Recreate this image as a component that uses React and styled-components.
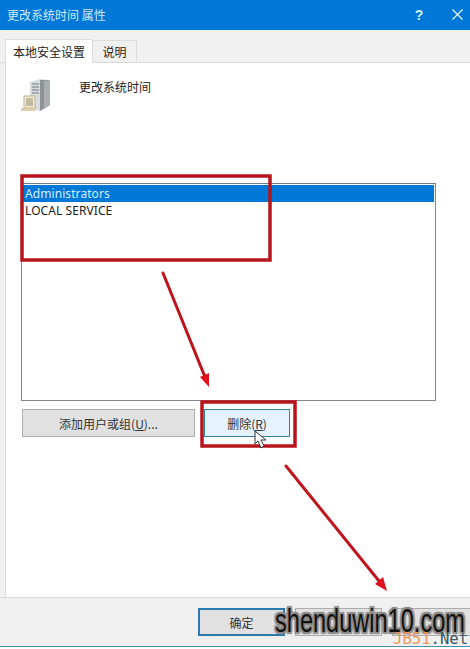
import React from 'react';
import styled, { createGlobalStyle } from 'styled-components';

const GlobalStyle = createGlobalStyle`
  html, body {
    margin: 0;
    padding: 0;
    background: #fff;
  }
  body {
    font-family: "Noto Sans CJK SC", "Liberation Sans", sans-serif;
    font-size: 12px;
    color: #222;
  }
`;

const Dialog = styled.div`
  position: relative;
  width: 470px;
  height: 649px;
  overflow: hidden;
  display: flex;
  flex-direction: column;
  background: #f0f0f0;
`;

const TitleBar = styled.div`
  height: 29px;
  flex: none;
  display: flex;
  align-items: center;
  padding: 0 0 1px 7px;
  background: #0078d7;
  color: #cfe8f8;
  font-size: 12px;
`;

const TitleText = styled.span`
  flex: 1;
`;

const HelpGlyph = styled.span`
  width: 12px;
  margin-right: 27px;
  color: #d8effa;
  font-family: "Liberation Sans", sans-serif;
  font-size: 14px;
  font-weight: bold;
  text-align: center;
`;

const CloseGlyph = styled.svg`
  margin-right: 7px;
`;

const TabStrip = styled.div`
  height: 33px;
  flex: none;
  box-sizing: border-box;
  display: flex;
  align-items: flex-end;
  padding-left: 5px;
  border-bottom: 1px solid #d9d9d9;
`;

const Tab = styled.div`
  box-sizing: border-box;
  display: flex;
  align-items: center;
  justify-content: center;
  color: #222;
  font-size: 12px;
  background: ${(p) => (p.$active ? '#fff' : '#f0f0f0')};
  width: ${(p) => (p.$active ? '87px' : '45px')};
  height: ${(p) => (p.$active ? '24px' : '22px')};
  margin-bottom: ${(p) => (p.$active ? '-1px' : '0')};
  border: 1px solid #dcdcdc;
  border-bottom: none;
  border-right: ${(p) => (p.$active ? 'none' : '1px solid #dcdcdc')};
`;

const Panel = styled.div`
  flex: 1;
  margin-left: 5px;
  padding: 15px 34px 0 15px;
  display: flex;
  flex-direction: column;
  background: #fff;
  border-left: 1px solid #d9d9d9;
`;

const PolicyHeader = styled.div`
  height: 105px;
  flex: none;
  display: flex;
  gap: 26px;
  align-items: flex-start;
`;

const PolicyName = styled.div`
  font-size: 12px;
  line-height: 18px;
`;

const ListBox = styled.div`
  box-sizing: border-box;
  height: 218px;
  flex: none;
  padding: 1px;
  border: 1px solid #828790;
  border-top-color: #6f7a88;
`;

const ListRow = styled.div`
  height: 17px;
  padding-left: 2px;
  line-height: 17px;
  font-family: "Noto Sans", "Liberation Sans", sans-serif;
  font-size: 12px;
  letter-spacing: 0.08px;
  background: ${(p) => (p.$selected ? '#0078d7' : 'transparent')};
  color: ${(p) => (p.$selected ? '#d4ecfa' : '#222')};
`;

const ActionRow = styled.div`
  display: flex;
  gap: 9px;
  margin: 8px 0 0 1px;
`;

const Button = styled.div`
  box-sizing: border-box;
  width: ${(p) => p.$width}px;
  height: 28px;
  flex: none;
  display: flex;
  align-items: center;
  justify-content: center;
  font-size: 12px;
  color: #333;
  background: ${(p) => p.$bg || '#e1e1e1'};
  border: ${(p) => p.$border || '1px solid #adadad'};
`;

const Mnemonic = styled.span`
  text-decoration: underline;
`;

const Footer = styled.div`
  height: 49px;
  flex: none;
  box-sizing: border-box;
  display: flex;
  gap: 10px;
  padding: 10px 0 0 198px;
  border-top: 1px solid #d0dcdc;
`;

const BottomLine = styled.div`
  height: 3px;
  flex: none;
  background: linear-gradient(#3b93bd 0 1px, #fff 1px);
`;

const Annotations = styled.svg`
  position: absolute;
  left: 0;
  top: 0;
  pointer-events: none;
`;

const Watermark = styled.div`
  position: absolute;
  left: 275px;
  top: 601px;
  color: #111;
  font-family: "Liberation Sans", sans-serif;
  font-size: 33px;
  line-height: 40px;
  white-space: nowrap;
  transform: scaleX(0.714);
  transform-origin: left center;
  text-shadow: 2px 0 1px #8f8b88, -2px 0 1px #8f8b88, 0 2px 1px #8f8b88, 0 -2px 1px #8f8b88,
    2px 2px 1px #8f8b88, -2px -2px 1px #8f8b88, 2px -2px 1px #8f8b88, -2px 2px 1px #8f8b88;
`;

const SubMark = styled.div`
  position: absolute;
  left: 393px;
  top: 630px;
  font-family: "DejaVu Sans Mono", monospace;
  font-size: 15.6px;
  line-height: 19px;
  color: #e89a5c;
  white-space: nowrap;
`;

const SubMarkDark = styled.span`
  color: #3d5560;
`;

const ServerIcon = () => (
  <svg width="32" height="34" viewBox="0 0 32 34" style={{ flex: 'none' }}>
    <path d="M9 4 L19 1 L29 2 V27 L19 33 L9 30 Z" fill="#d9dcde" />
    <path d="M19 2 L29 2 V27 L19 33 Z" fill="#8e9397" />
    <path d="M23 3 L29 2 V27 L23 30 Z" fill="#a9aeb1" />
    <path d="M11 6h7M11 9h7M11 12h7M11 15h7" stroke="#777d82" strokeWidth="1.2" />
    <path d="M3 18 H14 V30 H3 Z" fill="#f3ead2" stroke="#bcae8e" strokeWidth="1" />
    <path d="M5 21h7M5 23h7M5 25h7M5 27h7" stroke="#8e8a78" strokeWidth="1" />
    <path d="M0 30 H15 V33 H0 Z" fill="#dccfac" />
  </svg>
);

const App = () => (
  <Dialog>
    <GlobalStyle />
    <TitleBar>
      <TitleText>更改系统时间 属性</TitleText>
      <HelpGlyph>?</HelpGlyph>
      <CloseGlyph width="11" height="11" viewBox="0 0 11 11">
        <path d="M0.5 0.5 L10.5 10.5 M10.5 0.5 L0.5 10.5" stroke="#e6f5fc" strokeWidth="1.2" />
      </CloseGlyph>
    </TitleBar>
    <TabStrip>
      <Tab $active>本地安全设置</Tab>
      <Tab>说明</Tab>
    </TabStrip>
    <Panel>
      <PolicyHeader>
        <ServerIcon />
        <PolicyName>更改系统时间</PolicyName>
      </PolicyHeader>
      <ListBox>
        <ListRow $selected>Administrators</ListRow>
        <ListRow>LOCAL SERVICE</ListRow>
      </ListBox>
      <ActionRow>
        <Button $width={173}>
          <span>添加用户或组(<Mnemonic>U</Mnemonic>)...</span>
        </Button>
        <Button $width={86} $bg="#e5f1fb" $border="1px solid #2f7f9f">
          <span>删除(<Mnemonic>R</Mnemonic>)</span>
        </Button>
      </ActionRow>
    </Panel>
    <Footer>
      <Button $width={87} $bg="#e1e1e1" $border="2px solid #2a7ab0">确定</Button>
      <Button $width={87} />
      <Button $width={87} />
    </Footer>
    <BottomLine />
    <Annotations width="470" height="649" viewBox="0 0 470 649">
      <g fill="none" stroke="#b8141c" strokeWidth="3.5">
        <rect x="22" y="176" width="248" height="84" />
        <rect x="202" y="402" width="93" height="44" />
      </g>
      <g stroke="#c0141c" strokeWidth="3" strokeLinecap="round">
        <line x1="163" y1="273" x2="205" y2="377" />
        <line x1="286" y1="466" x2="379" y2="581" />
      </g>
      <path d="M209 387 L200 377 L209 373 Z" fill="#e0101c" />
      <path d="M387 591 L375 584 L383 577 Z" fill="#e0101c" />
      <path d="M255 431 V444 L258 441 L261 448 L264 446 L261 440 L266 440 Z" fill="#fff" stroke="#333" strokeWidth="1" />
    </Annotations>
    <Watermark>shenduwin10.com</Watermark>
    <SubMark>JB51<SubMarkDark>.Net</SubMarkDark></SubMark>
  </Dialog>
);

export default App;
